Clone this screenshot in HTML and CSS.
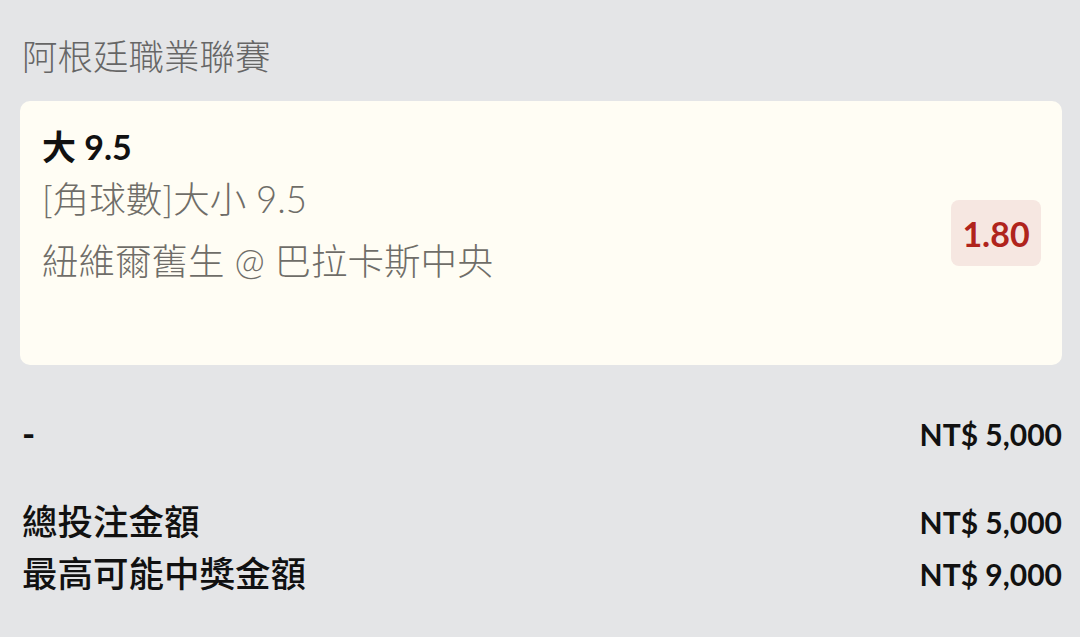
FILE: index.html
```html
<!DOCTYPE html>
<html lang="zh-Hant">
<head>
<meta charset="utf-8">
<link rel="stylesheet" href="styles.css">
</head>
<body>
<div class="page">
  <h1 class="league">阿根廷職業聯賽</h1>
  <div class="card">
    <div class="info">
      <div class="pick">大 9.5</div>
      <div class="market">[角球數]大小 9.5</div>
      <div class="match">紐維爾舊生 @ 巴拉卡斯中央</div>
    </div>
    <div class="odds">1.80</div>
  </div>
  <div class="row stake">
    <span class="dash">-</span>
    <span class="amt">NT$ 5,000</span>
  </div>
  <div class="totals">
    <div class="row">
      <span>總投注金額</span>
      <span class="amt">NT$ 5,000</span>
    </div>
    <div class="row">
      <span>最高可能中獎金額</span>
      <span class="amt">NT$ 9,000</span>
    </div>
  </div>
</div>
</body>
</html>
```

FILE: styles.css
```css
html, body {
  margin: 0;
  padding: 0;
  background: #e4e5e7;
}
body {
  font-family: "Lato", "Noto Sans CJK TC", sans-serif;
  width: 1080px;
  height: 637px;
  overflow: hidden;
}
.page {
  padding: 35px 18px 0 20px;
}
.league {
  margin: 0 0 0 2px;
  font-size: 35.5px;
  font-weight: 300;
  line-height: 44px;
  color: #666666;
}
.card {
  margin-top: 22px;
  background: #fffdf4;
  border-radius: 10px;
  height: 264px;
  box-sizing: border-box;
  padding: 21px 21px 0 22px;
  display: flex;
  justify-content: space-between;
  align-items: flex-start;
}
.info {
  display: flex;
  flex-direction: column;
}
.pick {
  font-size: 34px;
  font-weight: 700;
  color: #111;
  line-height: 50px;
}
.market {
  font-size: 36.5px;
  font-weight: 300;
  color: #6f6d68;
  line-height: 54px;
}
.match {
  font-size: 36.5px;
  font-weight: 300;
  color: #6f6d68;
  line-height: 70px;
}
.odds {
  align-self: center;
  margin-top: -21px;
  background: #f6e7e1;
  color: #b0241c;
  border-radius: 8px;
  font-size: 34px;
  font-weight: 700;
  width: 90px;
  height: 66px;
  display: flex;
  align-items: center;
  justify-content: center;
}
.row {
  display: flex;
  justify-content: space-between;
  align-items: center;
  font-size: 35.5px;
  font-weight: 500;
  color: #111;
  line-height: 52px;
  padding-left: 2px;
}
.stake {
  margin-top: 43px;
}
.dash {
  font-weight: 700;
}
.totals {
  margin-top: 36px;
}
.amt {
  font-weight: 700;
  font-size: 30px;
}
```
